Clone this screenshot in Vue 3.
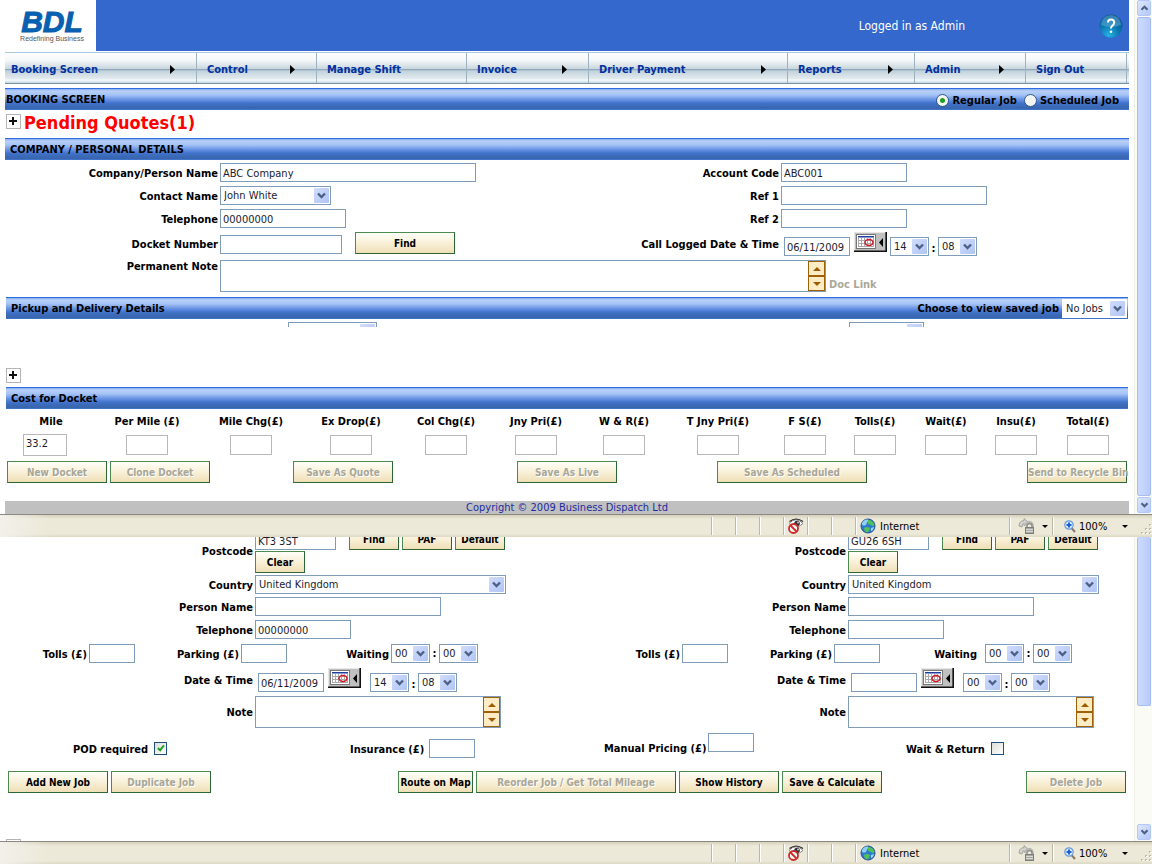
<script setup>
const menu = [
  { text: 'Booking Screen', sub: true },
  { text: 'Control', sub: true },
  { text: 'Manage Shift', sub: false },
  { text: 'Invoice', sub: true },
  { text: 'Driver Payment', sub: true },
  { text: 'Reports', sub: true },
  { text: 'Admin', sub: true },
  { text: 'Sign Out', sub: false }
]

const costs = [
  { id: 'mile', text: 'Mile', value: '33.2' },
  { id: 'permile', text: 'Per Mile (£)', value: '' },
  { id: 'milechg', text: 'Mile Chg(£)', value: '' },
  { id: 'exdrop', text: 'Ex Drop(£)', value: '' },
  { id: 'colchg', text: 'Col Chg(£)', value: '' },
  { id: 'jnypri', text: 'Jny Pri(£)', value: '' },
  { id: 'wr', text: 'W & R(£)', value: '' },
  { id: 'tjny', text: 'T Jny Pri(£)', value: '' },
  { id: 'fs', text: 'F S(£)', value: '' },
  { id: 'tolls', text: 'Tolls(£)', value: '' },
  { id: 'wait', text: 'Wait(£)', value: '' },
  { id: 'insu', text: 'Insu(£)', value: '' },
  { id: 'total', text: 'Total(£)', value: '' }
]

const sides = [
  { id: 'pickup', postcode: 'KT3 3ST', phone: '00000000', date: '06/11/2009', hour: '14', minute: '08' },
  { id: 'delivery', postcode: 'GU26 6SH', phone: '', date: '', hour: '00', minute: '00' }
]
</script>

<template>
  <div class="screen">
    <svg class="symbols" aria-hidden="true">
      <symbol id="chevron" viewBox="0 0 15 15">
        <path d="M4 5.5 L7.5 9 L11 5.5" fill="none" stroke="#4d6185" stroke-width="2.4" />
      </symbol>
      <symbol id="plus" viewBox="0 0 15 15">
        <rect x="0.5" y="0.5" width="14" height="14" fill="#fff" stroke="#b4b4b4" />
        <path d="M3 7h8M7 3v8" fill="none" stroke="#111" stroke-width="2" />
      </symbol>
      <symbol id="calendar" viewBox="0 0 33 20">
        <rect width="33" height="20" fill="#c0c0c0" />
        <path d="M0.5 19V0.5H32" fill="none" stroke="#e8e8e8" />
        <path d="M0 19.2H32.2V0" fill="none" stroke="#111" stroke-width="1.6" />
        <rect x="2.5" y="2.5" width="19" height="14" fill="#fff" stroke="#777" />
        <rect x="4" y="4" width="16" height="1.500" fill="#1c3fa0" />
        <path d="M4 8.5h16M4 11.5h16M4 14.5h16M4.5 6v9M7.5 6v9M10.500 6v9M13.500 6v9M16.500 6v9M19.500 6v9" stroke="#aaa" fill="none" />
        <ellipse cx="15" cy="10.500" rx="4" ry="3" fill="none" stroke="#d01828" stroke-width="1.500" />
        <path d="M29 6v9l-4-4.500z" fill="#000" />
      </symbol>
      <symbol id="eye" viewBox="0 0 16 16">
        <path d="M1 5.500Q8 -2 15 5.500Q8 12 1 5.500z" fill="#fff" stroke="#888" />
        <circle cx="9" cy="5.500" r="2.800" fill="#333" />
        <circle cx="10" cy="4.500" r="1" fill="#ccc" />
        <path d="M1.500 3.500Q8 -1.500 15 3.500" fill="none" stroke="#222" stroke-width="1.200" />
        <circle cx="5.500" cy="10.500" r="4.500" fill="#fff" fill-opacity="0.850" stroke="#cc2a2a" stroke-width="1.800" />
        <path d="M2.500 7.500l6 6" stroke="#cc2a2a" stroke-width="1.800" />
      </symbol>
      <symbol id="globe" viewBox="0 0 16 16">
        <circle cx="8" cy="8" r="7" fill="#2f78d0" stroke="#24508c" />
        <path d="M2 5Q4 1 8 1.500Q9 3 7 4.500L6 7Q4 8 2 7z" fill="#8fd0f4" />
        <path d="M8 2Q13 2 14.500 7Q13 9 11 7L8 6z" fill="#4fc05a" />
        <path d="M4 10Q7 8 10 10Q9 14 7 14.500Q4 13 4 10z" fill="#50c058" />
        <path d="M11 10l3-1q-1 4-3 4z" fill="#9adcf4" />
      </symbol>
      <symbol id="lock" viewBox="0 0 17 17">
        <path d="M1 8Q1 3 6 2.500V0.500L10 4L6 7.500V5.500Q4 6 4 9z" fill="#d2d2ce" stroke="#a4a4a0" />
        <path d="M7 8Q8 3 12 4Q15 5 15 9" fill="none" stroke="#b8b8b4" stroke-width="2" />
        <path d="M9 10V8Q9 5.500 11.500 5.500Q14 5.500 14 8V10" fill="none" stroke="#8e8e8a" stroke-width="1.500" />
        <rect x="7.500" y="9.500" width="8" height="6" fill="#a8a8a4" stroke="#7c7c78" />
        <path d="M8 11.500h7M8 13.500h7" stroke="#d8d8d4" />
      </symbol>
      <symbol id="lens" viewBox="0 0 12 13">
        <path d="M7.500 8l3.500 4" stroke="#8a7a68" stroke-width="2" />
        <circle cx="5" cy="5" r="4.200" fill="#d8ecff" stroke="#6a9ad8" stroke-width="1.200" />
        <path d="M2.500 5h5M5 2.500v5" stroke="#1c60c8" stroke-width="2" />
      </symbol>
      <symbol id="grip" viewBox="0 0 12 12">
        <path d="M9 1h2v2h-2zM5 5h2v2h-2zM9 5h2v2h-2zM1 9h2v2h-2zM5 9h2v2h-2zM9 9h2v2h-2z" fill="#c0bca8" />
        <path d="M10 2h2v1h-2zM6 6h2v1h-2zM10 6h2v1h-2zM2 10h2v1h-2zM6 10h2v1h-2zM10 10h2v1h-2z" fill="#fff" />
      </symbol>
    </svg>

    <section class="window first">
      <div class="page">
        <header class="banner">
          <div class="logo"><strong>BDL</strong><span>Redefining Business</span></div>
          <div class="strip">
            <p>Logged in as Admin</p>
            <button class="help" type="button" aria-label="Help">
              <svg viewBox="0 0 24 24" width="24" height="24" aria-hidden="true">
                <defs>
                  <radialGradient id="ball" cx="0.400" cy="0.900" r="0.900">
                    <stop offset="0" stop-color="#22b4e4" />
                    <stop offset="0.500" stop-color="#0c78b4" />
                    <stop offset="1" stop-color="#0c4f8c" />
                  </radialGradient>
                </defs>
                <circle cx="12" cy="12" r="11.500" fill="url(#ball)" />
                <path d="M2 11Q3 1 12 1Q21 1 22 11Q12 15 2 11z" fill="#8fd0ee" fill-opacity="0.350" />
                <path d="M9 8.500Q9 5.500 12 5.500Q15.200 5.500 15.200 8.500Q15.200 10.500 13.200 11.800Q12 12.800 12 14.500" fill="none" stroke="#fff" stroke-width="2" />
                <circle cx="12" cy="17.800" r="1.300" fill="#fff" />
              </svg>
            </button>
          </div>
        </header>

        <nav class="menu">
          <a v-for="m in menu" :key="m.text" href="#">
            {{ m.text }}
            <svg v-if="m.sub" width="5" height="9" viewBox="0 0 5 9" aria-hidden="true"><path d="M0 0v9l5-4.500z" /></svg>
          </a>
          <i></i>
        </nav>

        <div class="bar top">
          <h1>BOOKING SCREEN</h1>
          <div class="jobs">
            <label><input type="radio" name="job" checked />Regular Job</label>
            <label><input type="radio" name="job" />Scheduled Job</label>
          </div>
        </div>
        <div class="quotes">
          <button class="plus" type="button" aria-label="Expand quotes"><svg width="15" height="15"><use href="#plus" /></svg></button>
          <h2>Pending Quotes(1)</h2>
        </div>
        <div class="bar company"><h2>COMPANY / PERSONAL DETAILS</h2></div>

        <form class="details" @submit.prevent>
          <label for="company">Company/Person Name</label>
          <div><input id="company" class="w256" value="ABC Company" /></div>
          <label for="account">Account Code</label>
          <div><input id="account" class="w126" value="ABC001" /></div>

          <label for="contact">Contact Name</label>
          <div>
            <span class="select w111"><select id="contact"><option>John White</option></select><svg><use href="#chevron" /></svg></span>
          </div>
          <label for="ref1">Ref 1</label>
          <div><input id="ref1" class="w206" /></div>

          <label for="phone">Telephone</label>
          <div><input id="phone" class="w126" value="00000000" /></div>
          <label for="ref2">Ref 2</label>
          <div><input id="ref2" class="w126" /></div>

          <label for="docket">Docket Number</label>
          <div class="docket"><input id="docket" class="w122" /><button class="btn w100" type="button">Find</button></div>
          <label for="logged">Call Logged Date &amp; Time</label>
          <div class="when">
            <input id="logged" class="w66" value="06/11/2009" />
            <button class="cal" type="button" aria-label="Choose date"><svg width="33" height="20"><use href="#calendar" /></svg></button>
            <span class="select w39"><select aria-label="Hour"><option>14</option></select><svg><use href="#chevron" /></svg></span>
            <b>:</b>
            <span class="select w39"><select aria-label="Minute"><option>08</option></select><svg><use href="#chevron" /></svg></span>
          </div>

          <label class="notelabel" for="permanent">Permanent Note</label>
          <div class="permanent">
            <span class="note w606">
              <textarea id="permanent"></textarea>
              <span class="spin">
                <button type="button" aria-label="Scroll up"><svg viewBox="0 0 8 4"><path d="M0 4h8L4 0z" /></svg></button>
                <button type="button" aria-label="Scroll down"><svg viewBox="0 0 8 4"><path d="M0 0h8L4 4z" /></svg></button>
              </span>
            </span>
            <span class="doc">Doc Link</span>
          </div>
        </form>

        <div class="bar inset">
          <h2>Pickup and Delivery Details</h2>
          <div class="saved">
            <label for="saved">Choose to view saved job</label>
            <span class="select w65"><select id="saved"><option>No Jobs</option></select><svg><use href="#chevron" /></svg></span>
          </div>
        </div>
        <div class="peek">
          <span class="select w89"><select aria-label="Saved pickup"></select><svg><use href="#chevron" /></svg></span>
          <span class="select w75"><select aria-label="Saved delivery"></select><svg><use href="#chevron" /></svg></span>
        </div>
        <button class="plus lone" type="button" aria-label="Expand details"><svg width="15" height="15"><use href="#plus" /></svg></button>
        <div class="bar inset"><h2>Cost for Docket</h2></div>

        <div class="costs">
          <div v-for="c in costs" :key="c.id">
            <label :for="c.id">{{ c.text }}</label>
            <input :id="c.id" :class="{ big: c.value }" :value="c.value" />
          </div>
        </div>
        <div class="actions">
          <div>
            <button class="btn w100" type="button" disabled>New Docket</button>
            <button class="btn w100" type="button" disabled>Clone Docket</button>
          </div>
          <div><button class="btn w100" type="button" disabled>Save As Quote</button></div>
          <div><button class="btn w100" type="button" disabled>Save As Live</button></div>
          <div><button class="btn w150" type="button" disabled>Save As Scheduled</button></div>
          <div><button class="btn w100" type="button" disabled>Send to Recycle Bin</button></div>
        </div>
        <footer class="copyright">Copyright © 2009 Business Dispatch Ltd</footer>
      </div>
      <div class="scroll">
        <span class="knob"><svg class="up"><use href="#chevron" /></svg></span>
        <span class="thumb"></span>
        <span class="knob"><svg><use href="#chevron" /></svg></span>
      </div>
    </section>

    <div class="status">
      <span class="fill"></span><span></span><span></span><span></span>
      <span><svg width="16" height="16"><use href="#eye" /></svg></span>
      <span></span><span></span>
      <span class="zone"><svg width="16" height="16"><use href="#globe" /></svg><em>Internet</em></span>
      <span class="guard"><svg width="17" height="17"><use href="#lock" /></svg><i></i></span>
      <span class="zoom"><svg width="12" height="13"><use href="#lens" /></svg><em>100%</em><i></i><svg class="grip" width="12" height="12"><use href="#grip" /></svg></span>
    </div>

    <section class="window second">
      <div class="page">
        <div class="sides">
          <div v-for="s in sides" :key="s.id" class="side">
            <div class="row code">
              <label :for="s.id + 'code'">Postcode</label>
              <div class="lines">
                <div class="line">
                  <input :id="s.id + 'code'" class="w81" :value="s.postcode" />
                  <button class="btn w50" type="button">Find</button>
                  <button class="btn w50" type="button">PAF</button>
                  <button class="btn w50" type="button">Default</button>
                </div>
                <button class="btn w50" type="button">Clear</button>
              </div>
            </div>
            <div class="row country">
              <label :for="s.id + 'country'">Country</label>
              <span class="select w251"><select :id="s.id + 'country'"><option>United Kingdom</option></select><svg><use href="#chevron" /></svg></span>
            </div>
            <div class="row">
              <label :for="s.id + 'person'">Person Name</label>
              <input :id="s.id + 'person'" class="w186" />
            </div>
            <div class="row phone">
              <label :for="s.id + 'tel'">Telephone</label>
              <input :id="s.id + 'tel'" class="w96" :value="s.phone" />
            </div>
            <div class="row triple" :class="s.id">
              <label :for="s.id + 'tolls'">Tolls (£)</label>
              <input :id="s.id + 'tolls'" class="w46" />
              <label :for="s.id + 'park'">Parking (£)</label>
              <input :id="s.id + 'park'" class="w46" />
              <label :for="s.id + 'waith'">Waiting</label>
              <span class="select w39"><select :id="s.id + 'waith'"><option>00</option></select><svg><use href="#chevron" /></svg></span>
              <b>:</b>
              <span class="select w39"><select aria-label="Waiting minutes"><option>00</option></select><svg><use href="#chevron" /></svg></span>
            </div>
            <div class="row">
              <label :for="s.id + 'date'">Date &amp; Time</label>
              <div class="when job">
                <input :id="s.id + 'date'" class="w66" :value="s.date" />
                <button class="cal" type="button" aria-label="Choose date"><svg width="33" height="20"><use href="#calendar" /></svg></button>
                <span class="select w39"><select aria-label="Hour"><option>{{ s.hour }}</option></select><svg><use href="#chevron" /></svg></span>
                <b>:</b>
                <span class="select w39"><select aria-label="Minute"><option>{{ s.minute }}</option></select><svg><use href="#chevron" /></svg></span>
              </div>
            </div>
            <div class="row">
              <label :for="s.id + 'note'">Note</label>
              <span class="note w246">
                <textarea :id="s.id + 'note'"></textarea>
                <span class="spin">
                  <button type="button" aria-label="Scroll up"><svg viewBox="0 0 8 4"><path d="M0 4h8L4 0z" /></svg></button>
                  <button type="button" aria-label="Scroll down"><svg viewBox="0 0 8 4"><path d="M0 0h8L4 4z" /></svg></button>
                </span>
              </span>
            </div>
          </div>
        </div>

        <div class="extras">
          <div class="tick"><label for="pod">POD required</label><input id="pod" type="checkbox" checked /></div>
          <div class="insurance"><label for="insurance">Insurance (£)</label><input id="insurance" class="w46" /></div>
          <div class="manual"><label for="manual">Manual Pricing (£)</label><input id="manual" class="w46" /></div>
          <div class="tick"><label for="return">Wait &amp; Return</label><input id="return" type="checkbox" /></div>
        </div>

        <div class="jobactions">
          <div>
            <button class="btn w100" type="button">Add New Job</button>
            <button class="btn w100" type="button" disabled>Duplicate Job</button>
          </div>
          <div>
            <button class="btn w75" type="button">Route on Map</button>
            <button class="btn w200" type="button" disabled>Reorder Job / Get Total Mileage</button>
            <button class="btn w100" type="button">Show History</button>
            <button class="btn w100" type="button">Save &amp; Calculate</button>
          </div>
          <div><button class="btn w100" type="button" disabled>Delete Job</button></div>
        </div>
        <button class="plus last" type="button" aria-label="Expand jobs"><svg width="15" height="15"><use href="#plus" /></svg></button>
      </div>
      <div class="scroll">
        <span class="thumb"></span>
        <span class="track"></span>
        <span class="knob"><svg><use href="#chevron" /></svg></span>
      </div>
    </section>

    <div class="status">
      <span class="fill"></span><span></span><span></span><span></span>
      <span><svg width="16" height="16"><use href="#eye" /></svg></span>
      <span></span><span></span>
      <span class="zone"><svg width="16" height="16"><use href="#globe" /></svg><em>Internet</em></span>
      <span class="guard"><svg width="17" height="17"><use href="#lock" /></svg><i></i></span>
      <span class="zoom"><svg width="12" height="13"><use href="#lens" /></svg><em>100%</em><i></i><svg class="grip" width="12" height="12"><use href="#grip" /></svg></span>
    </div>
  </div>
</template>

<style>
body {
  background: #fff;
  overflow: hidden;
}
</style>

<style scoped>
.screen,
.screen * {
  box-sizing: border-box;
}
.screen {
  display: flex;
  flex-direction: column;
  height: 100vh;
  background: #fff;
  color: #000;
  font: 11px/14px "DejaVu Sans Condensed", "DejaVu Sans", sans-serif;
}
.symbols {
  position: absolute;
  width: 0;
  height: 0;
}
h1, h2, p {
  margin: 0;
  font-size: 11px;
}
label, b {
  font-weight: bold;
}
.window {
  display: flex;
}
.first {
  flex: none;
}
.second {
  flex: 1;
  min-height: 0;
  overflow: hidden;
}
.page {
  flex: 1;
  min-width: 0;
}

/* banner and menu */
.banner {
  display: flex;
  height: 51px;
  margin-right: 5px;
}
.logo {
  display: flex;
  flex-direction: column;
  align-items: center;
  width: 96px;
  padding: 8px 0 0 8px;
  font-family: "Liberation Sans", Arial, sans-serif;
}
.logo strong {
  color: #0860b0;
  font-size: 30px;
  font-style: italic;
  line-height: 27px;
  -webkit-text-stroke: 1px #0860b0;
}
.logo span {
  color: #555;
  font-size: 7px;
  line-height: 8px;
}
.strip {
  flex: 1;
  display: flex;
  justify-content: flex-end;
  align-items: center;
  padding-right: 6px;
  background: #3468cc;
  color: #fff;
}
.strip p {
  margin-right: 134px;
  font-size: 12px;
}
.help {
  width: 24px;
  height: 24px;
  padding: 0;
  border: 0;
  background: none;
}
.menu {
  display: grid;
  grid-template-columns: 191fr 120fr 150fr 122fr 199fr 127fr 111fr 101fr 3fr;
  height: 32px;
  margin: 1px 5px 4px;
  border-top: 1px solid #a8c8e0;
  border-bottom: 1px solid #7890a8;
  background: linear-gradient(#fff, #f4f7f8 25%, #c8d6de 53%, #8fa8bc 55%, #c2d2dc 60%, #e2eaee 85%, #f4fbff 90%, #c4d6e0);
}
.menu a {
  display: flex;
  justify-content: space-between;
  align-items: center;
  padding: 4px 21px 0 10px;
  border-left: 1px solid #9fb2c0;
  color: #0030a0;
  font-weight: bold;
  text-decoration: none;
}
.menu svg {
  margin-bottom: 1px;
}
.menu a:first-child {
  padding-left: 6px;
  border-left: 0;
}
.menu i {
  border-left: 1px solid #9fb2c0;
}

/* section bars */
.bar {
  display: flex;
  justify-content: space-between;
  align-items: center;
  height: 22px;
  margin: 0 5px;
  background: linear-gradient(#2f6ee0 0 1px, #86acf0 1px, #b9d1f9 3px, #a4c2f5 7px, #6f99e6 11px, #4274ce 15px, #3b6ab8 18px, #3a65ac 21px, #3f74cc 21px);
}
.bar h1,
.bar h2 {
  padding-top: 2px;
}
.top {
  padding: 0 10px 0 1px;
}
.company {
  padding-left: 5px;
}
.inset {
  margin: 0 6px;
  padding-left: 5px;
}
.jobs {
  display: flex;
  gap: 7px;
  padding-top: 4px;
}
.jobs label {
  display: flex;
  align-items: center;
  gap: 3px;
}
.jobs input {
  appearance: none;
  width: 13px;
  height: 13px;
  margin: 0 0 2px;
  padding: 0;
  border: 1px solid #2c5a90;
  border-radius: 50%;
  background: #f4f4f0;
}
.jobs input:checked {
  background: radial-gradient(#21a121 0 2px, #f4f4f0 3px);
}
.quotes {
  display: flex;
  align-items: center;
  gap: 3px;
  height: 28px;
  padding-left: 6px;
}
.quotes h2 {
  margin-bottom: 2px;
  color: #f00;
  font-size: 18px;
  line-height: 24px;
}
.quotes .plus {
  margin-bottom: 5px;
}
.plus {
  display: block;
  width: 15px;
  height: 15px;
  padding: 0;
  border: 0;
  background: none;
}
.plus svg,
.cal svg {
  display: block;
}

/* fields */
input,
select,
textarea {
  height: 19px;
  margin: 0;
  padding: 1px 2px 0;
  border: 1px solid #7f9db9;
  border-radius: 0;
  background: #fff;
  color: #1c1c2c;
  font: inherit;
}
.select {
  position: relative;
  display: block;
  height: 19px;
}
.select select {
  display: block;
  width: 100%;
  padding-left: 3px;
  appearance: none;
}
.select svg {
  position: absolute;
  top: 2px;
  right: 2px;
  width: 15px;
  height: 15px;
  border-radius: 1px;
  background: linear-gradient(135deg, #d0dcfc, #b0c4f4);
  pointer-events: none;
}
.w39 { width: 39px; }
.w46 { width: 46px; }
.w50 { width: 50px; }
.w65 { width: 65px; }
.w66 { width: 66px; }
.w75 { width: 75px; }
.w81 { width: 81px; }
.w89 { width: 89px; }
.w96 { width: 96px; }
.w100 { width: 100px; }
.w111 { width: 111px; }
.w122 { width: 122px; }
.w126 { width: 126px; }
.w150 { width: 150px; }
.w186 { width: 186px; }
.w200 { width: 200px; }
.w206 { width: 206px; }
.w246 { width: 246px; }
.w251 { width: 251px; }
.w256 { width: 256px; }
.w606 { width: 606px; }
.btn {
  height: 22px;
  padding: 2px 0 0;
  border: 1px solid;
  border-color: #4c8a50 #2c6634 #2c6634 #4c8a50;
  background: linear-gradient(#fffef8, #f8f0d8 50%, #efdfb6);
  color: #000;
  font: bold 10px/14px "DejaVu Sans Condensed", "DejaVu Sans", sans-serif;
  white-space: nowrap;
}
.btn:disabled {
  color: #a8a698;
  text-shadow: 1px 1px #fff;
}
.cal {
  width: 33px;
  height: 20px;
  padding: 0;
  border: 0;
}

.details {
  display: grid;
  grid-template-columns: 218px 1fr 160px 353px;
  grid-template-rows: 23px 23px 23px 28px 35px;
  column-gap: 2px;
  align-items: center;
  padding: 1px 0 4px;
}
.details > label {
  padding-top: 2px;
  text-align: right;
}
.docket {
  display: flex;
  align-items: flex-end;
  gap: 13px;
  height: 24px;
  align-self: start;
}
.when {
  display: flex;
  align-items: flex-end;
  align-self: start;
  height: 24px;
  padding-left: 3px;
}
.details .when {
  height: 26px;
}
.when .cal {
  align-self: flex-start;
  margin: 0 3px 0 4px;
}
.details .cal {
  margin-top: 2px;
}
.job .cal {
  margin-right: 9px;
}
.when b {
  width: 9px;
  text-align: center;
}
.details .notelabel {
  align-self: start;
}
.permanent {
  grid-column: 2 / -1;
  align-self: start;
  display: flex;
  align-items: flex-end;
  gap: 3px;
  padding-top: 2px;
}
.doc {
  color: #aca899;
  font-weight: bold;
}
.note {
  position: relative;
  display: block;
  height: 32px;
}
.note textarea {
  display: block;
  width: 100%;
  height: 32px;
  resize: none;
}
.spin {
  position: absolute;
  top: 1px;
  right: 1px;
  display: flex;
  flex-direction: column;
  width: 17px;
}
.spin button {
  display: grid;
  place-items: center;
  height: 15px;
  padding: 0;
  border: 1px solid #a06008;
  background: #ffecc4;
}
.spin svg {
  width: 8px;
  height: 4px;
  fill: #a05a00;
}
.saved {
  display: flex;
  align-items: center;
  gap: 3px;
  margin-right: 1px;
}
.saved label {
  padding-top: 2px;
}
.saved select {
  border-color: #fff;
}
.peek {
  display: grid;
  grid-template-columns: 561fr 285fr;
  height: 8px;
  padding: 3px 0 0 288px;
  overflow: hidden;
}
.lone {
  margin: 41px 0 4px 6px;
}
.costs {
  display: grid;
  grid-template-columns: 90fr 102fr 106fr 94fr 96fr 84fr 92fr 96fr 78fr 62fr 80fr 60fr 84fr;
  margin: 6px 4px 5px 6px;
}
.costs div {
  display: flex;
  flex-direction: column;
  align-items: center;
}
.costs label {
  white-space: nowrap;
}
.costs input {
  width: 42px;
  height: 20px;
  margin: 6px 0 1px;
  border-color: #b8b8b8;
}
.costs .big {
  width: 44px;
  height: 22px;
  margin: 5px 12px 0 0;
  padding-bottom: 4px;
}
.actions {
  display: grid;
  grid-template-columns: 286fr 224fr 200fr 310fr 100fr;
  margin: 0 7px 18px;
}
.actions div,
.jobactions div {
  display: flex;
  gap: 3px;
}
.copyright {
  height: 13px;
  margin: 0 5px;
  background: #c0c0c0;
  color: #1c2ca0;
  text-align: center;
}

/* scroll bars */
.scroll {
  display: flex;
  flex-direction: column;
  gap: 1px;
  width: 18px;
  padding: 0 1px 1px 2px;
  border-left: 1px solid #f0efe6;
  background: #fbfbf6;
}
.knob {
  height: 16px;
  border: 1px solid #b4c8f8;
  border-radius: 2px;
  background: linear-gradient(135deg, #dce6ff, #b4c8f8);
}
.knob svg {
  display: block;
  width: 13px;
  height: 14px;
}
.up {
  transform: rotate(180deg);
}
.thumb {
  flex: 1;
  border: 1px solid #a8bcf0;
  border-radius: 2px;
  background: linear-gradient(90deg, #ccdafe, #b8ccfa);
}
.second .thumb {
  flex: 170;
  border-top: 0;
}
.track {
  flex: 117;
}

/* status bars */
.status {
  display: flex;
  flex: none;
  height: 23px;
  border-top: 1px solid #8c8a80;
  background: linear-gradient(#d4d0bc, #ece9d8 4px 19px, #dcd8c4);
}
.status > span {
  display: flex;
  align-items: center;
  width: 24px;
  margin: 2px 0;
  padding-left: 4px;
  border-left: 1px solid #bcb8a8;
  box-shadow: inset 1px 0 #fff;
}
.status .fill {
  flex: 1;
  margin: 0;
  border: 0;
  background: linear-gradient(90deg, #f2f0ea, transparent 50px);
  box-shadow: none;
}
.status em {
  padding-top: 2px;
  font-style: normal;
}
.status .zone {
  gap: 4px;
  width: 154px;
}
.status .guard {
  gap: 7px;
  width: 43px;
  padding-left: 8px;
}
.status .zoom {
  gap: 3px;
  width: 100px;
  padding-left: 11px;
}
.status i {
  border: 3px solid transparent;
  border-top-color: #000;
  border-bottom: 0;
}
.zoom i {
  margin-left: 12px;
}
.zoom .grip {
  align-self: flex-end;
  margin-left: auto;
}

/* job entry */
.sides {
  display: grid;
  grid-template-columns: 593fr 541fr;
  margin-top: -9px;
}
.row {
  display: flex;
  align-items: center;
  gap: 2px;
  margin-bottom: 4px;
}
.row label {
  padding-top: 2px;
}
.row > label {
  flex: none;
  width: 253px;
  text-align: right;
}
.code {
  margin-bottom: 2px;
}
.country {
  margin-bottom: 3px;
}
.phone {
  margin-bottom: 5px;
}
.lines {
  display: grid;
  gap: 1px;
}
.line {
  display: flex;
  align-items: flex-end;
  gap: 3px;
}
.line input {
  margin-right: 10px;
}
.triple {
  margin-bottom: 5px;
}
.triple > label {
  width: 102px;
}
.triple > label:first-child {
  width: 87px;
}
.triple > label:nth-of-type(3) {
  width: 100px;
}
.delivery > label:nth-of-type(3) {
  width: 101px;
  padding-right: 6px;
}
.triple b {
  width: 5px;
  text-align: center;
}
.extras {
  display: grid;
  grid-template-columns: 277fr 254fr 302fr 228fr;
  height: 25px;
  margin: 1px 0 13px;
  padding-left: 73px;
}
.extras div {
  display: flex;
  align-items: center;
  gap: 2px;
  padding-top: 6px;
}
.extras label {
  padding-top: 2px;
}
.extras .tick {
  gap: 6px;
}
.extras .insurance {
  gap: 5px;
}
.extras .manual {
  padding: 0;
  align-items: flex-start;
}
.manual label {
  margin-top: 7px;
}
.tick input {
  appearance: none;
  display: grid;
  place-items: center;
  width: 13px;
  height: 13px;
  padding: 0;
  border-color: #1c5180;
  background: linear-gradient(135deg, #dcdcd7, #fff);
}
.tick input:checked::after {
  content: "";
  width: 2px;
  height: 5px;
  margin-bottom: 2px;
  border: solid #21a121;
  border-width: 0 2px 2px 0;
  transform: rotate(40deg);
}
.jobactions {
  display: grid;
  grid-template-columns: 390fr 628fr 100fr;
  margin: 0 8px;
}
.last {
  margin: 46px 0 0 6px;
}
</style>
